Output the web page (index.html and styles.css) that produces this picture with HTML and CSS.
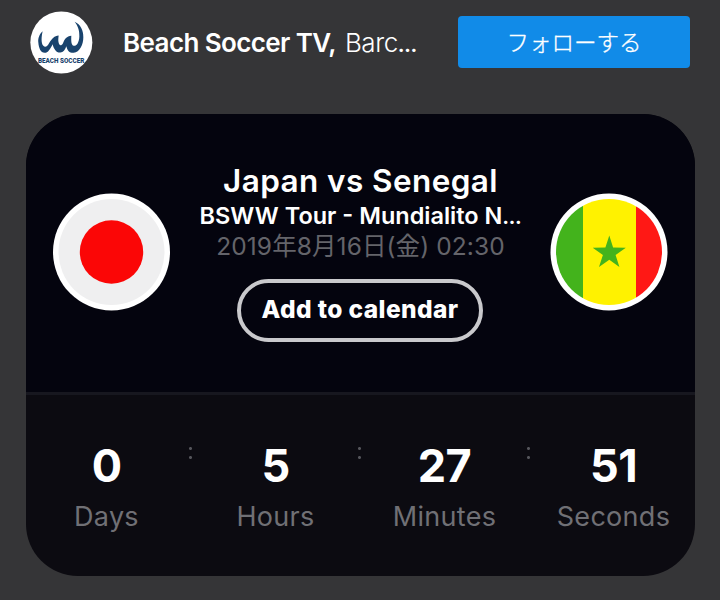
FILE: index.html
```html
<!DOCTYPE html>
<html lang="ja">
<head>
<meta charset="utf-8">
<title>Beach Soccer TV</title>
<link rel="stylesheet" href="styles.css">
</head>
<body>
<header class="channel">
  <svg class="avatar" viewBox="0 1.5 189 189" aria-hidden="true">
    <circle cx="94" cy="96" r="93" fill="#fff"/>
    <path fill="#19436d" d="M38 62C27 72 24 84 25 96C26 112 32 127 44 127C54 127 61 115 68 101C71 115 79 127 91 126C100 125 105 118 109 107C112 120 119 128 131 127C149 125 160 102 160 80C160 60 152 42 134 34C143 45 149 60 148 78C147 97 140 107 131 106C124 105 123 92 124 76C110 77 104 86 99 98C94 107 88 106 86 97C84 90 85 83 86 75C73 76 66 84 58 97C52 108 46 112 40 106C33 98 34 78 38 62Z"/>
    <text class="logo-text" x="24" y="157" textLength="139" lengthAdjust="spacingAndGlyphs">BEACH SOCCER</text>
  </svg>
  <div class="channel-name"><span class="name">Beach Soccer TV,</span><span class="place">Barc<b>…</b></span></div>
  <button class="follow">フォローする</button>
</header>
<main class="card">
  <section class="match">
    <svg class="flag" viewBox="0 0 118 118" role="img" aria-label="Japan">
      <circle cx="58.5" cy="59" r="58.5" fill="#fff"/>
      <circle cx="58.5" cy="59" r="53" fill="#efeff0"/>
      <circle cx="58.5" cy="59" r="31.7" fill="#fb0606"/>
    </svg>
    <div class="details">
      <h1 class="title">Japan vs Senegal</h1>
      <p class="event">BSWW Tour - Mundialito N<span>…</span></p>
      <p class="date">2019年8月16日(金) 02:30</p>
      <button class="calendar">Add to calendar</button>
    </div>
    <svg class="flag" viewBox="0 0 118 118" role="img" aria-label="Senegal">
      <defs><clipPath id="disc"><circle cx="59" cy="59" r="53"/></clipPath></defs>
      <circle cx="59" cy="59" r="58.5" fill="#fff"/>
      <g clip-path="url(#disc)">
        <path fill="#43b31c" d="M0 0h33v118H0z"/>
        <path fill="#fff200" d="M33 0h53v118H33z"/>
        <path fill="#ff1815" d="M86 0h32v118H86z"/>
      </g>
      <path fill="#43b31c" d="M59.3 42.5L63.1 54.6L75.8 54.7L65.6 62.1L69.4 74.1L59.3 66.8L49 74.1L52.9 62.1L42.7 54.7L55.4 54.6Z"/>
    </svg>
  </section>
  <section class="countdown">
    <div class="unit"><span class="value">0</span><span class="label">Days</span></div>
    <div class="unit"><span class="value">5</span><span class="label">Hours</span></div>
    <div class="unit"><span class="value">27</span><span class="label">Minutes</span></div>
    <div class="unit"><span class="value">51</span><span class="label">Seconds</span></div>
  </section>
</main>
</body>
</html>
```
FILE: styles.css
```css
* { box-sizing: border-box; }
body {
  margin: 0;
  width: 720px;
  height: 600px;
  overflow: hidden;
  background: #353537;
  color: #fff;
  font-family: Inter, "Noto Sans CJK JP", sans-serif;
}
button { font-family: inherit; color: inherit; padding: 0; }
.channel {
  display: flex;
  align-items: center;
  height: 84px;
  padding: 0 30px;
}
.avatar { width: 63px; height: 63px; flex: none; }
.logo-text { font: 900 20px Roboto, sans-serif; fill: #19436d; }
.channel-name {
  display: flex;
  gap: 9px;
  flex: 1;
  height: 36px;
  margin: 1px 0 0 30px;
  font-size: 26px;
  line-height: 36px;
  white-space: nowrap;
}
.name { font-weight: 600; letter-spacing: -0.6px; }
.place { font-weight: 300; letter-spacing: -0.4px; }
.place b { font-weight: 900; font-size: 17px; line-height: 0; letter-spacing: -1px; }
.follow {
  width: 232px;
  height: 52px;
  border: 0;
  border-radius: 4px;
  background: #118be8;
  font-size: 22.5px;
  font-weight: 300;
  padding-bottom: 3px;
  -webkit-text-stroke: 0.3px #fff;
}
.card {
  width: 669px;
  height: 462px;
  margin: 30px 0 0 26px;
  border-radius: 52px;
  overflow: hidden;
  background: #0c0b11;
}
.match {
  display: flex;
  justify-content: space-between;
  height: 281px;
  padding: 0 27px;
  background: #04040e;
  border-bottom: 3px solid #17171f;
}
.flag { width: 118px; height: 118px; margin-top: 79px; flex: none; }
.details {
  display: flex;
  flex-direction: column;
  align-items: center;
  width: 340px;
  padding-top: 48px;
  white-space: nowrap;
}
.title { margin: 0; font-size: 31.5px; line-height: 38px; font-weight: 600; letter-spacing: 0.4px; }
.event { margin: 0; font-size: 23.5px; line-height: 32px; font-weight: 600; letter-spacing: 0; }
.event span { font-size: 17px; line-height: 0; font-weight: 900; }
.date { margin: 0; height: 30px; font-size: 24.5px; line-height: 28px; font-weight: 400; letter-spacing: 0.1px; color: #64646a; }
.calendar {
  width: 246px;
  height: 63px;
  margin: 17px 1px 0 0;
  border: 4px solid #c9c9cc;
  border-radius: 32px;
  background: transparent;
  font-size: 24.5px;
  font-weight: 800;
  letter-spacing: 0.4px;
  padding-bottom: 3px;
}
.countdown {
  display: grid;
  grid-template-columns: repeat(4, 169px);
  margin-left: -4px;
  padding-top: 43px;
}
.unit {
  position: relative;
  display: flex;
  flex-direction: column;
  align-items: center;
}
.unit:not(:last-child)::after {
  content: "";
  position: absolute;
  top: 9px;
  right: -1px;
  width: 3px;
  height: 12px;
  background:
    radial-gradient(circle at 1.5px 1.5px, #55555b 1.2px, transparent 1.7px) top / 3px 3px no-repeat,
    radial-gradient(circle at 1.5px 1.5px, #55555b 1.2px, transparent 1.7px) bottom / 3px 3px no-repeat;
}
.value { font-size: 45px; line-height: 56px; font-weight: 700; letter-spacing: -0.6px; }
.label { font-size: 27px; line-height: 36px; margin-top: 5px; color: #707075; letter-spacing: 0.3px; font-weight: 400; }
```
